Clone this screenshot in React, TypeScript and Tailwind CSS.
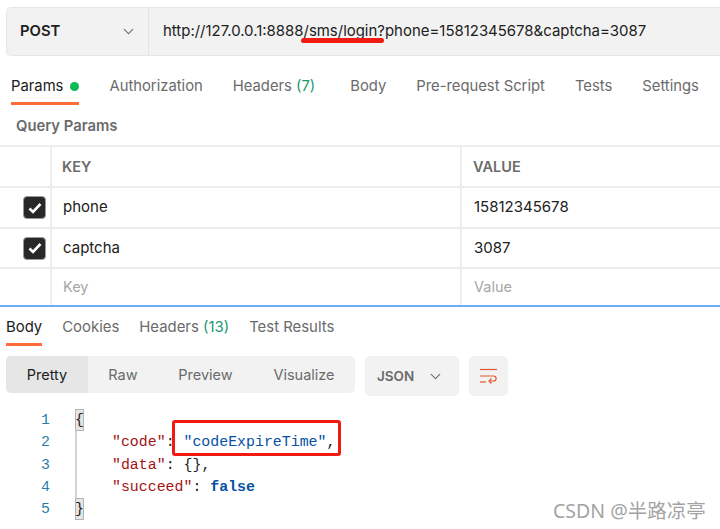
import { ChevronDown } from "lucide-react";

const topTabs = ["Authorization", "Headers", "Body", "Pre-request Script", "Tests", "Settings"];
const codeLines = [1, 2, 3, 4, 5];

function Checkbox() {
  return (
    <div className="flex h-[23px] w-[23px] items-center justify-center rounded-[4px] border border-[#9a9a9a] bg-[#282828]">
      <svg width="14" height="12" viewBox="0 0 14 12" fill="none">
        <path d="M1.5 6.5L5 10L12.5 2" stroke="#ffffff" strokeWidth="2.6" />
      </svg>
    </div>
  );
}

function ParamRow({ name, value, height }: { name: string; value: string; height: string }) {
  return (
    <div className={`flex border-b-2 border-[#ededed] text-[15px] text-[#212121] ${height}`}>
      <div className="flex w-[52px] shrink-0 items-center justify-end border-r-2 border-[#ededed] pr-[4px]">
        <Checkbox />
      </div>
      <div className="flex w-[410px] shrink-0 items-center border-r-2 border-[#ededed] pl-[11px]">{name}</div>
      <div className="flex items-center pl-[12px]">{value}</div>
    </div>
  );
}

export default function App() {
  return (
    <div className="relative h-[529px] w-[720px] overflow-hidden bg-white font-['Inter',sans-serif] text-[14.5px]">
      {/* Request bar */}
      <div className="pt-[7px] pl-[6px]">
        <div className="flex h-[49px] rounded-l-[5px] border-y border-l border-[#e6e6e6] bg-[#f2f2f2]">
          <div className="flex w-[142px] shrink-0 items-center justify-between border-r border-[#e3e3e3] pr-[11px] pl-[13px]">
            <span className="text-[14.8px] font-semibold text-[#212121]">POST</span>
            <ChevronDown size={17} strokeWidth={1.5} className="text-[#6b6b6b]" />
          </div>
          <div className="flex items-center pl-[14px] text-[14.95px] text-[#212121]">
            http://127.0.0.1:8888/sms/login?phone=15812345678&amp;captcha=3087
          </div>
        </div>
      </div>

      {/* Request tabs */}
      <div className="flex h-[47px] items-start gap-[30px] pt-[21px] pl-[11px] text-[14.8px] text-[#6b6b6b]">
        <div className="flex h-[28px] flex-col justify-between">
          <div className="flex items-center gap-[7px] leading-[18px] text-[#212121]">
            Params
            <span className="h-[9px] w-[9px] rounded-full bg-[#0cbb52]" />
          </div>
          <div className="h-[3px] bg-[#ff6c37]" />
        </div>
        {topTabs.map((tab) => (
          <div key={tab} className={tab === "Headers" ? "pr-[5px] leading-[18px]" : "leading-[18px]"}>
            {tab}
            {tab === "Headers" && <span className="text-[#1a9a6c]"> (7)</span>}
          </div>
        ))}
      </div>

      <div className="flex h-[42px] items-center pt-[4px] pl-[16px] text-[14.8px] font-semibold text-[#6b6b6b]">
        Query Params
      </div>

      {/* Params table */}
      <div className="border-t-2 border-[#ededed]">
        <div className="flex h-[41px] border-b-2 border-[#ededed] text-[14.5px] font-semibold text-[#6b6b6b]">
          <div className="w-[52px] shrink-0 border-r-2 border-[#ededed]" />
          <div className="flex w-[410px] shrink-0 items-center border-r-2 border-[#ededed] pl-[10px]">KEY</div>
          <div className="flex items-center pl-[11px]">VALUE</div>
        </div>
        <ParamRow name="phone" value="15812345678" height="h-[41px]" />
        <ParamRow name="captcha" value="3087" height="h-[40px]" />
        <div className="flex h-[38px] border-b-2 border-[#6cacf5] text-[#a6a6a6]">
          <div className="w-[52px] shrink-0 border-r-2 border-[#ededed]" />
          <div className="flex w-[410px] shrink-0 items-center border-r-2 border-[#ededed] pl-[11px]">Key</div>
          <div className="flex items-center pl-[12px]">Value</div>
        </div>
      </div>

      {/* Response tabs */}
      <div className="flex h-[38px] items-start gap-[20px] pt-[11px] pl-[6px] text-[14.9px] text-[#6b6b6b]">
        <div className="flex h-[28px] flex-col justify-between leading-[18px] text-[#212121]">
          Body
          <div className="h-[3px] bg-[#ff6c37]" />
        </div>
        <div className="leading-[18px]">Cookies</div>
        <div className="leading-[18px]">
          Headers <span className="text-[#1a9a6c]">(13)</span>
        </div>
        <div className="leading-[18px]">Test Results</div>
      </div>

      {/* Response toolbar */}
      <div className="mt-[11px] flex items-start pl-[6px] text-[#6b6b6b]">
        <div className="flex h-[37px] w-[349px] overflow-hidden rounded-[5px] bg-[#f2f2f2]">
          <div className="flex w-[82px] items-center justify-center bg-[#e6e6e6] text-[#212121]">Pretty</div>
          <div className="flex w-[70px] items-center justify-center">Raw</div>
          <div className="flex w-[95px] items-center justify-center">Preview</div>
          <div className="flex w-[102px] items-center justify-center">Visualize</div>
        </div>
        <div className="ml-[10px] flex h-[40px] w-[94px] items-center justify-between rounded-[5px] bg-[#f2f2f2] pr-[15px] pl-[12px] text-[13.5px] font-semibold">
          JSON
          <ChevronDown size={17} strokeWidth={1.5} />
        </div>
        <div className="ml-[10px] flex h-[40px] w-[39px] items-center justify-center rounded-[5px] bg-[#f2f2f2]">
          <svg width="19" height="16" viewBox="0 0 19 16" fill="none" stroke="#e2582c" strokeWidth="1.2">
            <path d="M1 1.5H18" />
            <path d="M1 8H14.5C18 8 18 13 14.5 13H10" />
            <path d="M12.5 10.5L10 13L12.5 15.5" />
            <path d="M1 14H7" />
          </svg>
        </div>
      </div>

      {/* Response code */}
      <div className="mt-[13px] flex font-['Liberation_Mono',monospace] text-[14.9px] leading-[22.3px]">
        <div className="w-[50px] shrink-0 text-right text-[#2a7fa8]">
          {codeLines.map((n) => (
            <div key={n}>{n}</div>
          ))}
        </div>
        <div className="ml-[25px] flex flex-col">
          <div className="flex h-[22.3px] items-center">
            <span className="flex h-[22px] w-[9px] items-center justify-center border border-[#b5b5b5] bg-[#e5e5e5] text-[#212121]">{"{"}</span>
          </div>
          <div className="w-[2px] flex-1 bg-[#d4d4d4]" />
          <div className="flex h-[22.3px] items-center">
            <span className="flex h-[22px] w-[9px] items-center justify-center border border-[#b5b5b5] bg-[#e5e5e5] text-[#212121]">{"}"}</span>
          </div>
        </div>
        <div className="ml-[28px] pt-[22.3px] whitespace-pre text-[#212121]">
          <div>
            <span className="text-[#a31515]">"code"</span>:{" "}
            <span className="text-[#0451a5]">"codeExpireTime"</span>,
          </div>
          <div>
            <span className="text-[#a31515]">"data"</span>: {"{}"},
          </div>
          <div>
            <span className="text-[#a31515]">"succeed"</span>:{" "}
            <span className="font-bold text-[#0451a5]">false</span>
          </div>
        </div>
      </div>

      {/* Annotations drawn over the screenshot */}
      <div className="absolute top-[38px] left-[301px] h-[5px] w-[83px] rounded-full bg-[#f01a10]" />
      <div className="absolute top-[420px] left-[172px] h-[36px] w-[169px] rounded-[3px] border-[3px] border-[#f01a10]" />
      <div className="absolute top-[497px] left-[553px] font-['Noto_Sans','Noto_Sans_CJK_SC',sans-serif] text-[19.5px] leading-[28px] text-[#a3a3a3]">
        CSDN @半路凉亭
      </div>
    </div>
  );
}
